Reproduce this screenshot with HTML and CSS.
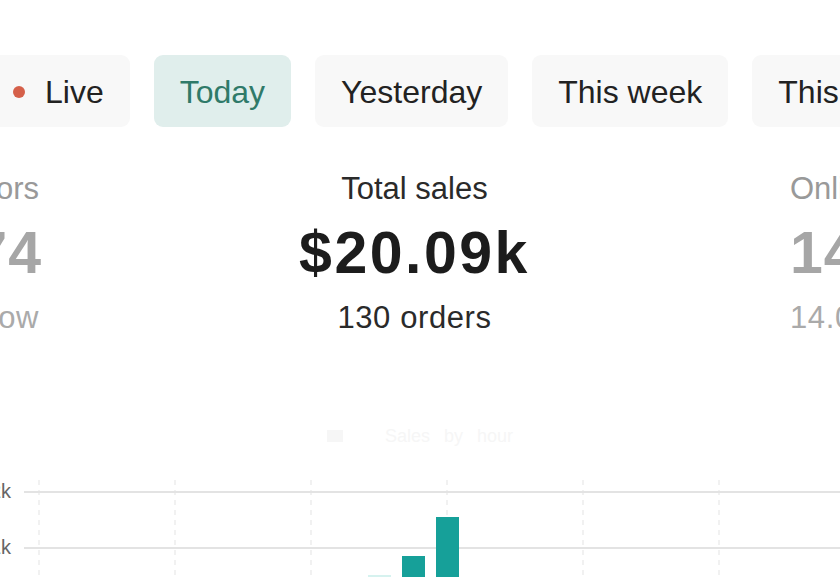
FILE: index.html
```html
<!DOCTYPE html>
<html lang="en">
  <head>
    <meta charset="UTF-8" />
    <meta name="viewport" content="width=device-width, initial-scale=1.0" />
    <title>Live view</title>
    <link rel="stylesheet" href="styles.css">
  </head>
  <body>
    <div class="tabs">
      <div class="tab"><span class="live-dot"></span>Live</div>
      <div class="tab active">Today</div>
      <div class="tab">Yesterday</div>
      <div class="tab">This week</div>
      <div class="tab">This month</div>
    </div>

    <div class="stats">
      <div class="stat side left">
        <div class="stat-label">Visitors</div>
        <div class="stat-value">74</div>
        <div class="stat-sub">Right now</div>
      </div>
      <div class="stat main">
        <div class="stat-label">Total sales</div>
        <div class="stat-value">$20.09k</div>
        <div class="stat-sub">130 orders</div>
      </div>
      <div class="stat side right">
        <div class="stat-label">Online store sessions</div>
        <div class="stat-value">144</div>
        <div class="stat-sub">14.0k this week</div>
      </div>
    </div>

    <div class="chart-legend">
      <span class="swatch"></span>
      <span>Sales</span> <span>by</span> <span>hour</span>
    </div>

    <svg class="chart" width="840" height="97" viewBox="0 0 840 97">
      <!-- vertical guides -->
      <g stroke="#ededed" stroke-width="1.5" stroke-dasharray="5 5">
        <line x1="39" y1="0" x2="39" y2="97" />
        <line x1="175" y1="0" x2="175" y2="97" />
        <line x1="311" y1="0" x2="311" y2="97" />
        <line x1="447" y1="0" x2="447" y2="97" />
        <line x1="583" y1="0" x2="583" y2="97" />
        <line x1="719" y1="0" x2="719" y2="97" />
      </g>
      <!-- horizontal grid -->
      <g stroke="#e3e3e3" stroke-width="2">
        <line x1="24" y1="12" x2="840" y2="12" />
        <line x1="24" y1="68" x2="840" y2="68" />
      </g>
      <g class="axis-label" text-anchor="end">
        <text x="11" y="18">2k</text>
        <text x="11" y="74">1k</text>
      </g>
      <!-- bars -->
      <rect x="368" y="95" width="23" height="6" fill="#d6f2ef" />
      <rect x="402" y="76" width="23" height="30" fill="#16a099" />
      <rect x="436" y="37" width="23" height="70" fill="#16a099" />
    </svg>
  </body>
</html>
```

FILE: styles.css
```css
body {
  margin: 0;
  background: white;
  font-family: "Liberation Sans", Arial, sans-serif;
  color: #222;
  overflow: hidden;
}
.tabs {
  display: flex;
  gap: 24px;
  margin: 55px 0 0 -13px;
}
.tab {
  flex: none;
  display: flex;
  align-items: center;
  height: 72px;
  padding: 2px 26px 0;
  box-sizing: border-box;
  border-radius: 9px;
  background-color: #f8f8f8;
  font-size: 32px;
  color: #222;
  white-space: nowrap;
}
.tab.active {
  background-color: #e0eeec;
  color: #2f7a69;
}
.live-dot {
  width: 12px;
  height: 12px;
  border-radius: 50%;
  background-color: #d5604a;
  margin-right: 20px;
}
.stats {
  display: grid;
  grid-template-columns: 39px 1fr 50px;
  margin-top: 44px;
}
.stat {
  display: flex;
  flex-direction: column;
  white-space: nowrap;
}
.stat.main {
  align-items: center;
}
.stat.left {
  align-items: flex-end;
}
.stat.right {
  align-items: flex-start;
}
.stat-label {
  font-size: 31px;
  line-height: 36px;
  color: #2a2a2a;
}
.stat-value {
  margin-top: 13px;
  font-size: 59px;
  line-height: 66px;
  font-weight: bold;
  letter-spacing: 2.5px;
  color: #1c1c1c;
}
.stat-sub {
  margin-top: 14px;
  font-size: 31px;
  line-height: 36px;
  letter-spacing: 0.6px;
  color: #2a2a2a;
}
.stat.side .stat-label {
  color: #999;
}
.stat.side .stat-value {
  color: #a6a6a6;
  letter-spacing: 1px;
}
.stat.side .stat-sub {
  color: #aaa;
}
.stat.left .stat-value {
  margin-right: -3px;
}
.chart-legend {
  display: flex;
  justify-content: center;
  align-items: center;
  gap: 14px;
  margin-top: 90px;
  font-size: 18px;
  line-height: 20px;
  color: #f6f6f6;
}
.swatch {
  width: 16px;
  height: 12px;
  background-color: #f6f6f6;
  margin-right: 28px;
}
.chart {
  display: block;
  margin-top: 34px;
}
.axis-label {
  font-family: "Liberation Sans", Arial, sans-serif;
  font-size: 20px;
  fill: #666;
}
```
